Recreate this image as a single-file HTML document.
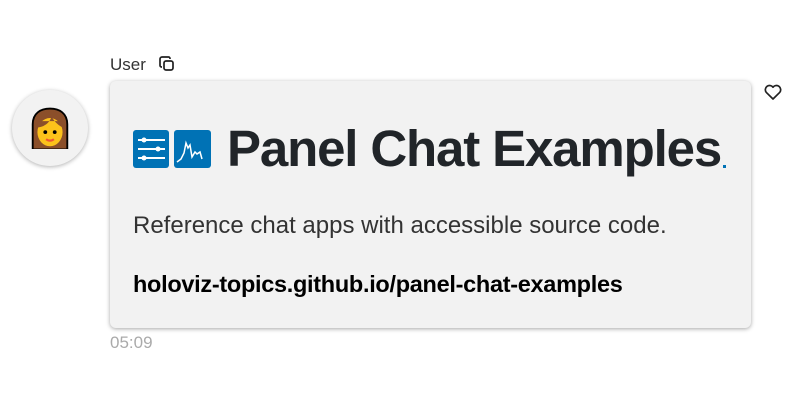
<!DOCTYPE html>
<html><head><style>
body{margin:0;width:800px;height:418px;background:#fff;font-family:"Liberation Sans",sans-serif;position:relative;overflow:hidden}
.abs{position:absolute;white-space:nowrap}
.card{position:absolute;left:110px;top:81px;width:641px;height:247px;background:#f2f2f2;border-radius:6px;box-shadow:0 1px 4px rgba(0,0,0,.35)}
.av{position:absolute;left:12px;top:90px;width:76px;height:76px;border-radius:50%;background:#f2f2f2;box-shadow:0 1px 4px rgba(0,0,0,.3)}
</style></head><body>
<div class="abs" style="left:110px;top:55px;font-size:17px;color:#333">User</div>
<svg class="abs" style="left:158px;top:55px" width="18" height="18" viewBox="0 0 18 18" fill="none" stroke="#222" stroke-width="1.7"><rect x="6" y="6" width="9" height="9" rx="2"/><path d="M12 4V3.5A1.5 1.5 0 0 0 10.5 2H4A2 2 0 0 0 2 4v6.5A1.5 1.5 0 0 0 3.5 12H4"/></svg>
<div class="av"><svg style="position:absolute;left:15px;top:17px" width="46" height="44" viewBox="0 0 26 28"><path d="M2 27V11C2 4 7 1 13 1s11 3 11 10v16z" fill="#8b4f2a" stroke="#000" stroke-width="1.2"/><ellipse cx="13" cy="16" rx="8" ry="9" fill="#fcc21b"/><path d="M5 13c4 0 8-3 9-7 2 4 5 6 7 7V9H5z" fill="#8b4f2a"/><circle cx="10" cy="16" r="1.2"/><circle cx="16" cy="16" r="1.2"/><path d="M10.5 20.5q2.5 1.8 5 0" stroke="#e53" stroke-width="1.4" fill="none"/><path d="M1 27.5h24" stroke="#f2f2f2" stroke-width="1.5"/></svg></div>
<svg class="abs" style="left:764px;top:84px" width="18" height="16" viewBox="0 0 18 16"><path d="M9 15L2.2 8.3A4 4 0 0 1 9 3.2a4 4 0 0 1 6.8 5.1z" fill="none" stroke="#222" stroke-width="1.7" stroke-linejoin="round"/></svg>
<div class="card"></div>
<svg class="abs" style="left:133px;top:130px" width="78" height="38" viewBox="0 0 78 38"><rect width="36" height="38" rx="3" fill="#0072b5"/><rect x="41" width="37" height="38" rx="3" fill="#0072b5"/><g stroke="#fff" stroke-width="2"><path d="M5 10h27M5 19h27M5 28h27"/></g><g fill="#fff"><circle cx="11" cy="10" r="2.5"/><circle cx="25" cy="19" r="2.5"/><circle cx="11" cy="28" r="2.5"/></g><path d="M44 32l4-3 3-6 2-10 2 5 2-3 2 12 3-5 2 2 3-2 2 7" fill="none" stroke="#fff" stroke-width="1.5"/></svg>
<div class="abs" style="left:227px;top:119px;font-size:51px;font-weight:bold;color:#212529;letter-spacing:-1.15px">Panel Chat Examples</div>
<div class="abs" style="left:723px;top:165px;width:3px;height:3px;background:#0072b5"></div>
<div class="abs" style="left:133px;top:212px;font-size:24px;color:#333">Reference chat apps with accessible source code.</div>
<div class="abs" style="left:133px;top:271px;font-size:23.5px;font-weight:bold;color:#000;letter-spacing:-0.3px">holoviz-topics.github.io/panel-chat-examples</div>
<div class="abs" style="left:110px;top:333px;font-size:17px;color:#aaa">05:09</div>
</body></html>
